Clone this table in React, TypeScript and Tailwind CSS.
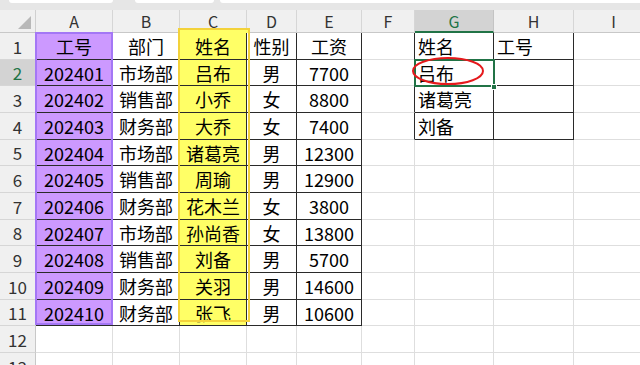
import React from "react";

const COLS = ["A", "B", "C", "D", "E", "F", "G", "H", "I"];

const data: string[][] = [
  ["工号", "部门", "姓名", "性别", "工资", "", "姓名", "工号", ""],
  ["202401", "市场部", "吕布", "男", "7700", "", "吕布", "", ""],
  ["202402", "销售部", "小乔", "女", "8800", "", "诸葛亮", "", ""],
  ["202403", "财务部", "大乔", "女", "7400", "", "刘备", "", ""],
  ["202404", "市场部", "诸葛亮", "男", "12300", "", "", "", ""],
  ["202405", "销售部", "周瑜", "男", "12900", "", "", "", ""],
  ["202406", "财务部", "花木兰", "女", "3800", "", "", "", ""],
  ["202407", "市场部", "孙尚香", "女", "13800", "", "", "", ""],
  ["202408", "销售部", "刘备", "男", "5700", "", "", "", ""],
  ["202409", "财务部", "关羽", "男", "14600", "", "", "", ""],
  ["202410", "财务部", "张飞", "男", "10600", "", "", "", ""],
  ["", "", "", "", "", "", "", "", ""],
  ["", "", "", "", "", "", "", "", ""],
];

function inTable(r: number, c: number) {
  if (r >= 0 && r <= 10 && c >= 0 && c <= 4) return true;
  if (r >= 0 && r <= 3 && c >= 6 && c <= 7) return true;
  return false;
}

function cellBg(r: number, c: number) {
  if (r <= 10 && c === 0) return "bg-[#cc99ff] ";
  if (r <= 10 && c === 2) return "bg-[#ffff66] ";
  return "bg-white ";
}

export default function App() {
  const cells: React.ReactNode[] = [];

  cells.push(
    <div
      key="corner"
      className="relative bg-[#f0f0f0] border-r border-b border-r-[#d0d0d0] border-b-[#c8c8c8]"
    >
      <div className="absolute right-[4px] bottom-[3px] w-0 h-0 border-l-[13px] border-l-transparent border-b-[13px] border-b-[#b8b8b8]" />
    </div>
  );
  COLS.forEach((c) => {
    const sel = c === "G";
    cells.push(
      <div
        key={"h" + c}
        className={
          "flex items-center justify-center text-[16px] border-r " +
          (sel
            ? "bg-[#d3d3d3] text-[#217346] border-b-2 border-b-[#217346] border-r-[#c4c4c4]"
            : "bg-[#f0f0f0] text-[#333] border-b border-b-[#c8c8c8] border-r-[#d6d6d6]")
        }
      >
        {c}
      </div>
    );
  });

  data.forEach((row, r) => {
    const sel = r === 1;
    cells.push(
      <div
        key={"r" + r}
        className={
          "flex items-center justify-center text-[17px] border-r border-b border-b-[#d6d6d6] " +
          (sel
            ? "bg-[#d3d3d3] text-[#217346] border-r-[#217346]"
            : "bg-[#f0f0f0] text-[#333] border-r-[#c8c8c8]")
        }
      >
        {r + 1}
      </div>
    );
    row.forEach((v, c) => {
      const darkR = inTable(r, c) || inTable(r, c + 1);
      const darkB = inTable(r, c) || inTable(r + 1, c);
      const left = c >= 6;
      cells.push(
        <div
          key={r + "-" + c}
          className={
            "flex items-center whitespace-nowrap text-[18px] text-black border-r border-b " +
            cellBg(r, c) +
            (darkR ? "border-r-[#2a2a2a] " : "border-r-[#dedede] ") +
            (darkB ? "border-b-[#2a2a2a] " : "border-b-[#dedede] ") +
            (left ? "justify-start pl-[3px]" : "justify-center")
          }
        >
          {v}
        </div>
      );
    });
  });

  return (
    <div className="relative w-[640px] h-[365px] overflow-hidden bg-white font-['Noto_Sans_CJK_SC','Microsoft_YaHei',sans-serif]">
      {/* top strip */}
      <div className="h-[10px] bg-[#e6e6e6] flex items-start">
        <div className="ml-[9px] w-[104px] h-[3px] bg-white rounded-b-[4px]" />
        <div className="ml-[22px] w-[79px] h-[3px] bg-white rounded-b-[4px]" />
        <div className="ml-[6px] flex-1 h-[3px] bg-white rounded-bl-[4px]" />
      </div>

      <div className="grid grid-cols-[36px_77px_67px_67px_50px_65px_53px_79px_80px_80px] grid-rows-[23px_27px_26px_27px_27px_26px_27px_27px_26px_27px_27px_26px_27px_27px] leading-none">
        {cells}
      </div>

      {/* highlight outlines on top */}
      <div className="absolute left-[35px] top-[32px] w-[78px] h-[293px] border-2 border-[#a477f5]" />
      <div className="absolute left-[178px] top-[28px] w-[72px] h-[294px] border-2 border-[#f3d23a] flex flex-col">
        <div className="h-[3px] bg-[#ffff66]" />
      </div>

      {/* selection */}
      <div className="absolute left-[414px] top-[59px] w-[81px] h-[28px] border-2 border-[#217346]" />
      <div className="absolute left-[491px] top-[84px] w-[6px] h-[6px] bg-[#217346] border border-white" />

      {/* red ellipse */}
      <svg
        className="absolute left-[410px] top-[55px]"
        width="76"
        height="32"
        viewBox="0 0 76 32"
      >
        <ellipse cx="38" cy="16" rx="35" ry="13" fill="none" stroke="#e5191c" strokeWidth="2" />
      </svg>
    </div>
  );
}
